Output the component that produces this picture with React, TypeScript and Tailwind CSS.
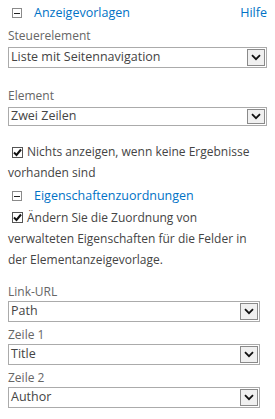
import React from "react";

const font = { fontFamily: '"Open Sans", "Liberation Sans", sans-serif' };

function Minus() {
  return (
    <span className="flex h-[10px] w-[10px] items-center justify-center border border-[#8a8a8a] bg-white">
      <span className="block h-[1px] w-[6px] bg-[#222]" />
    </span>
  );
}

function Check() {
  return (
    <span className="flex h-[11px] w-[11px] shrink-0 items-center justify-center border border-[#555] bg-white">
      <svg width="9" height="9" viewBox="0 0 9 9">
        <path d="M1 4.5 L3.5 7 L8 1.5" fill="none" stroke="#111" strokeWidth="2" />
      </svg>
    </span>
  );
}

function Select({ value, w, h }: { value: string; w: string; h: string }) {
  return (
    <div className={`flex ${w} ${h} items-stretch border border-[#ababab] bg-white`}>
      <div className="flex flex-1 items-center pl-[2px] text-[12.5px] text-[#444]">{value}</div>
      <div className="my-[1px] mr-[1px] flex w-[18px] items-center justify-center border border-[#8a8a8a] bg-[#f0f0f0]">
        <svg width="10" height="7" viewBox="0 0 10 7">
          <path d="M1 1.2 L5 5.2 L9 1.2" fill="none" stroke="#111" strokeWidth="1.8" />
        </svg>
      </div>
    </div>
  );
}

export default function App() {
  return (
    <div className="h-[419px] w-[275px] bg-white pl-[8px] pt-[3px] text-[12px]" style={font}>
      <div className="flex h-[20px] w-[259px] items-center text-[12.5px]">
        <span className="ml-[4px] mr-[12px]"><Minus /></span>
        <span className="text-[#0072c6]">Anzeigevorlagen</span>
        <span className="ml-auto text-[#0072c6]">Hilfe</span>
      </div>
      <div className="mt-[3px] flex h-[20px] items-center text-[#666]">Steuerelement</div>
      <div className="mt-[1px]">
        <Select value="Liste mit Seitennavigation" w="w-[259px]" h="h-[21px]" />
      </div>
      <div className="mt-[18px] flex h-[20px] items-center text-[#666]">Element</div>
      <div className="mt-[1px]">
        <Select value="Zwei Zeilen" w="w-[259px]" h="h-[19px]" />
      </div>
      <div className="mt-[16px] flex h-[20px] items-center text-[#444]">
        <span className="ml-[4px] mr-[4px]"><Check /></span>
        <span>Nichts anzeigen, wenn keine Ergebnisse</span>
      </div>
      <div className="flex h-[22px] items-center text-[#444]">vorhanden sind</div>
      <div className="mt-[2px] flex h-[20px] items-center text-[12.5px]">
        <span className="ml-[4px] mr-[12px]"><Minus /></span>
        <span className="text-[#0072c6]">Eigenschaftenzuordnungen</span>
      </div>
      <div className="mt-[1px] flex h-[21px] items-center text-[#444]">
        <span className="ml-[4px] mr-[4px]"><Check /></span>
        <span>Ändern Sie die Zuordnung von</span>
      </div>
      <div className="flex h-[21px] items-center text-[#444]">verwalteten Eigenschaften für die Felder in</div>
      <div className="flex h-[21px] items-center text-[#444]">der Elementanzeigevorlage.</div>
      <div className="mt-[14px] flex h-[16px] items-center text-[#666]">Link-URL</div>
      <div className="mt-[1px]">
        <Select value="Path" w="w-[252px]" h="h-[21px]" />
      </div>
      <div className="mt-[5px] flex h-[16px] items-center text-[#666]">Zeile 1</div>
      <div className="mt-[1px]">
        <Select value="Title" w="w-[252px]" h="h-[21px]" />
      </div>
      <div className="mt-[5px] flex h-[16px] items-center text-[#666]">Zeile 2</div>
      <div className="mt-[1px]">
        <Select value="Author" w="w-[252px]" h="h-[21px]" />
      </div>
    </div>
  );
}
